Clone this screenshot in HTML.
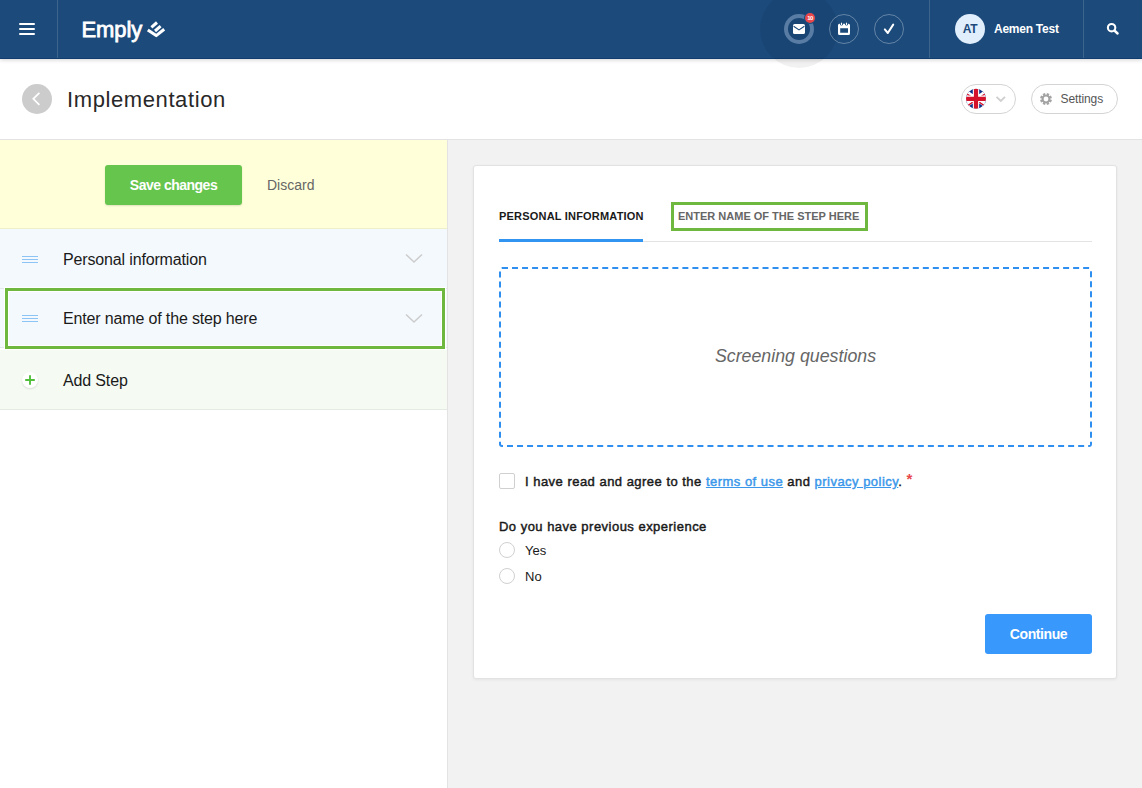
<!DOCTYPE html>
<html><head><meta charset="utf-8">
<style>
*{box-sizing:border-box;margin:0;padding:0}
html,body{width:1142px;height:788px;overflow:hidden;background:#f2f2f2;font-family:"Liberation Sans",sans-serif;color:#1a1a1a}
.abs{position:absolute}
svg{position:absolute;overflow:visible}
#hdr{position:absolute;left:0;top:0;width:1142px;height:59px;background:#1b4a7b;border-bottom:1px solid #0f3d70;box-shadow:0 1px 4px rgba(0,0,0,.18);z-index:2}
#title{position:absolute;left:0;top:59px;width:1142px;height:81px;background:#fff;border-bottom:1px solid #e3e3e3;z-index:1}
#left{position:absolute;left:0;top:140px;width:448px;height:648px;background:#fff;border-right:1px solid #e3e3e3}
.vdiv{position:absolute;top:0;width:1px;height:58px;background:rgba(255,255,255,.15)}
.hcirc{position:absolute;width:30px;height:30px;border-radius:50%;border:1px solid rgba(255,255,255,.32)}
</style></head><body>
<div id="hdr">
  <!-- hamburger -->
  <div class="abs" style="left:19px;top:23px;width:16px;height:2px;border-radius:1px;background:#fff"></div>
  <div class="abs" style="left:19px;top:28px;width:16px;height:2px;border-radius:1px;background:#fff"></div>
  <div class="abs" style="left:19px;top:33px;width:16px;height:2px;border-radius:1px;background:#fff"></div>
  <div class="vdiv" style="left:57px"></div>
  <div class="abs" style="left:81.5px;top:17px;color:#fff;font-size:22px;font-weight:normal;-webkit-text-stroke:0.8px #fff;letter-spacing:-0.1px">Emply</div>
  <svg style="left:0;top:0" width="1" height="1"><g fill="none" stroke="#fff" stroke-width="3" stroke-linejoin="round">
    <path d="M147.8 29.9 L156.2 35.6 L164.2 29.3"/>
    <path d="M151.4 27.3 L157 22.5"/>
    <path d="M155 31 L160.6 26.2"/>
  </g></svg>
  <!-- big faint circle -->
  <div class="abs" style="left:760px;top:-10px;width:78px;height:78px;border-radius:50%;background:rgba(0,0,0,.055)"></div>
  <div class="hcirc" style="left:784px;top:14px;border:4px solid #587ca4"></div>
  <svg style="left:0;top:0" width="1" height="1">
    <rect x="793" y="24" width="12" height="10" rx="1.6" fill="#fff"/>
    <path d="M793.6 26.3 L799 29.9 L804.4 26.3" fill="none" stroke="#1b4a7b" stroke-width="1.2"/>
  </svg>
  <div class="abs" style="left:805px;top:13px;width:10px;height:10px;border-radius:50%;background:#e8474b;box-shadow:0 0 0 1px #1b4a7b;color:#fff;font-size:6px;font-weight:bold;text-align:center;line-height:10px;letter-spacing:-0.5px">10</div>
  <div class="hcirc" style="left:829px;top:14px"></div>
  <svg style="left:0;top:0" width="1" height="1">
    <path d="M839.5 23.8 H848.5 Q850 23.8 850 25.3 V33.5 Q850 35 848.5 35 H839.5 Q838 35 838 33.5 V25.3 Q838 23.8 839.5 23.8 Z M840.2 28.2 V32.8 H848 V28.2 Z" fill="#fff" fill-rule="evenodd"/>
    <ellipse cx="841.5" cy="24.2" rx="1.3" ry="1.4" fill="#1b4a7b"/>
    <ellipse cx="846.5" cy="24.2" rx="1.3" ry="1.4" fill="#1b4a7b"/>
    <rect x="841" y="22.6" width="1" height="2.4" rx="0.5" fill="#fff"/>
    <rect x="846" y="22.6" width="1" height="2.4" rx="0.5" fill="#fff"/>
  </svg>
  <div class="hcirc" style="left:874px;top:14px"></div>
  <svg style="left:0;top:0" width="1" height="1">
    <path d="M884.8 29.4 L887.8 33 L893.2 24.6" fill="none" stroke="#fff" stroke-width="2" stroke-linecap="round" stroke-linejoin="round"/>
  </svg>
  <div class="vdiv" style="left:929px"></div>
  <div class="abs" style="left:955px;top:14px;width:30px;height:30px;border-radius:50%;background:#e1eefb;color:#1b4a7b;font-size:12px;font-weight:bold;text-align:center;line-height:30px;letter-spacing:-0.3px">AT</div>
  <div class="abs" style="left:994px;top:22px;color:#fff;font-size:12px;font-weight:bold;letter-spacing:-0.25px">Aemen Test</div>
  <div class="vdiv" style="left:1083px"></div>
  <svg style="left:0;top:0" width="1" height="1">
    <circle cx="1111.6" cy="27.7" r="3.7" fill="none" stroke="#fff" stroke-width="2.1"/>
    <path d="M1114.4 30.5 L1117.6 33.5" stroke="#fff" stroke-width="2.4" stroke-linecap="round"/>
  </svg>
</div>
<div id="title">
  <div class="abs" style="left:22px;top:25px;width:30px;height:30px;border-radius:50%;background:#cccccc"></div>
  <svg style="left:0;top:0" width="1" height="1">
    <path d="M39.4 33.8 L33.3 39.8 L39.4 45.8" fill="none" stroke="#fff" stroke-width="1.7"/>
  </svg>
  <div class="abs" style="left:67px;top:28px;font-size:22px;color:#282828;letter-spacing:0.6px">Implementation</div>
  <div class="abs" style="left:961px;top:25px;width:55px;height:30px;border-radius:15px;border:1px solid #d4d4d4;background:#fff"></div>
  <svg style="left:0;top:0" width="1" height="1">
    <defs><clipPath id="fc"><circle cx="976" cy="39.8" r="10"/></clipPath></defs>
    <g clip-path="url(#fc)">
      <rect x="961" y="29.8" width="30" height="20" fill="#0b2f8a"/>
      <path d="M961 29.8 L991 49.8 M991 29.8 L961 49.8" stroke="#fff" stroke-width="4.2"/>
      <path d="M961 29.8 L976 39.8 M991 49.8 L976 39.8" stroke="#d4122c" stroke-width="1.4" transform="translate(-0.6 0.9)"/>
      <path d="M991 29.8 L976 39.8 M961 49.8 L976 39.8" stroke="#d4122c" stroke-width="1.4" transform="translate(0.6 0.9)"/>
      <path d="M976 28 V52 M964 39.8 H988" stroke="#fff" stroke-width="6.4"/>
      <path d="M976 28 V52 M964 39.8 H988" stroke="#d4122c" stroke-width="4.2"/>
    </g>
    <path d="M996.5 37.8 L1000.8 42 L1005 37.8" fill="none" stroke="#cfcfcf" stroke-width="1.8"/>
  </svg>
  <div class="abs" style="left:1031px;top:25px;width:87px;height:30px;border-radius:15px;border:1px solid #d4d4d4;background:#fff;font-size:12px;color:#555;padding-left:28.5px;line-height:28px;letter-spacing:-0.1px">Settings</div>
  <svg style="left:0;top:0" width="1" height="1">
    <g transform="translate(1046 40)" fill="#a3a3a3">
      <circle r="4.1"/>
      <g transform="rotate(22.5)"><rect x="-1.3" y="-5.9" width="2.6" height="11.8"/><rect x="-1.3" y="-5.9" width="2.6" height="11.8" transform="rotate(45)"/><rect x="-1.3" y="-5.9" width="2.6" height="11.8" transform="rotate(90)"/><rect x="-1.3" y="-5.9" width="2.6" height="11.8" transform="rotate(135)"/></g>
      <circle r="2.4" fill="#fff"/>
    </g>
  </svg>
</div>
<div id="left">
  <div class="abs" style="left:0;top:0;width:447px;height:89px;background:#ffffd9;border-bottom:1px solid #efefc9">
    <div class="abs" style="left:105px;top:25px;width:137px;height:40px;background:#66c54d;border-radius:3px;box-shadow:0 1px 2px rgba(0,0,0,.12);color:#fff;font-size:14px;font-weight:bold;text-align:center;line-height:40px;letter-spacing:-0.5px">Save changes</div>
    <div class="abs" style="left:267px;top:37px;font-size:14px;color:#666">Discard</div>
  </div>
  <div class="abs" style="left:0;top:89px;width:447px;height:60px;background:#f4f9fd;border-bottom:1px solid #e3e8ee">
    <svg style="left:0;top:0" width="1" height="1"><path d="M22 27.5 H38 M22 30.5 H38 M22 33.5 H38" stroke="#8cc4f6" stroke-width="1"/></svg>
    <div class="abs" style="left:63px;top:21.5px;font-size:16px;letter-spacing:-0.15px">Personal information</div>
    <svg style="left:0;top:0" width="1" height="1"><path d="M406 25.5 L414 33 L422 25.5" fill="none" stroke="#cccccc" stroke-width="1.5"/></svg>
  </div>
  <div class="abs" style="left:0;top:149px;width:447px;height:59px;background:#f4f9fd;border-bottom:1px solid #e3e8ee"></div>
  <div class="abs" style="left:5px;top:148px;width:440px;height:61px;border:3px solid #6fb83f;box-shadow:0 0 0 1px #fff,inset 0 0 0 1px #fff">
    <svg style="left:-8px;top:-3px" width="1" height="1"><path d="M22 27.5 H38 M22 30.5 H38 M22 33.5 H38" stroke="#8cc4f6" stroke-width="1"/></svg>
    <div class="abs" style="left:55px;top:18.5px;font-size:16px;letter-spacing:-0.15px">Enter name of the step here</div>
    <svg style="left:-8px;top:-3px" width="1" height="1"><path d="M406 26.5 L414 34 L422 26.5" fill="none" stroke="#cccccc" stroke-width="1.5"/></svg>
  </div>
  <div class="abs" style="left:0;top:210px;width:447px;height:60px;background:#f5faf3;border-bottom:1px solid #e3ebe3">
    <div class="abs" style="left:22px;top:22px;width:16px;height:16px;border-radius:50%;background:#fff;box-shadow:0 1px 2px rgba(0,0,0,.12)"></div>
    <svg style="left:0;top:0" width="1" height="1"><path d="M30 25.2 V34.8 M25.2 30 H34.8" stroke="#52bf3c" stroke-width="1.9"/></svg>
    <div class="abs" style="left:63px;top:21.5px;font-size:16px;letter-spacing:-0.15px">Add Step</div>
  </div>
</div>
<div class="abs" style="left:473px;top:165px;width:644px;height:514px;background:#fff;border:1px solid #e2e2e2;border-radius:3px;box-shadow:0 1px 3px rgba(0,0,0,.06)">
  <div class="abs" style="left:25px;top:44px;font-size:11px;font-weight:bold;color:#1a1a1a;letter-spacing:0.2px">PERSONAL INFORMATION</div>
  <div class="abs" style="left:25px;top:75px;width:593px;height:1px;background:#e3e3e3"></div>
  <div class="abs" style="left:25px;top:73px;width:144px;height:3px;background:#3194f0"></div>
  <div class="abs" style="left:197px;top:36px;width:197px;height:29px;border:3px solid #6fb83f"></div>
  <div class="abs" style="left:204px;top:44px;font-size:11px;font-weight:bold;color:#666">ENTER NAME OF THE STEP HERE</div>
  <div class="abs" style="left:25px;top:101px;width:593px;height:180px;border:2px dashed #2f8ff0;border-radius:3px"></div>
  <div class="abs" style="left:25px;top:180px;width:593px;text-align:center;font-size:17.8px;font-style:italic;color:#666">Screening questions</div>
  <div class="abs" style="left:25px;top:307px;width:16px;height:16px;border:1px solid #d0d0d0;border-radius:2px"></div>
  <div class="abs" style="left:51px;top:308px;font-size:13px;font-weight:normal;-webkit-text-stroke:0.45px #1a1a1a;letter-spacing:0.48px">I have read and agree to the <span style="color:#3a97ea;-webkit-text-stroke:0.45px #3a97ea;text-decoration:underline">terms of use</span> and <span style="color:#3a97ea;-webkit-text-stroke:0.45px #3a97ea;text-decoration:underline">privacy policy</span>.&nbsp; </div>
  <div class="abs" style="left:432.5px;top:304px;font-size:15px;font-weight:bold;color:#e8474b">*</div>
  <div class="abs" style="left:25px;top:353px;font-size:13px;font-weight:normal;-webkit-text-stroke:0.45px #1a1a1a;letter-spacing:0.48px">Do you have previous experience</div>
  <div class="abs" style="left:25px;top:376px;width:16px;height:16px;border:1px solid #d0d0d0;border-radius:50%"></div>
  <div class="abs" style="left:51px;top:377px;font-size:13px">Yes</div>
  <div class="abs" style="left:25px;top:402px;width:16px;height:16px;border:1px solid #d0d0d0;border-radius:50%"></div>
  <div class="abs" style="left:51px;top:403px;font-size:13px">No</div>
  <div class="abs" style="left:511px;top:448px;width:107px;height:40px;background:#3898fb;border-radius:3px;color:#fff;font-size:14px;font-weight:bold;text-align:center;line-height:40px;letter-spacing:-0.4px">Continue</div>
</div>
</body></html>
